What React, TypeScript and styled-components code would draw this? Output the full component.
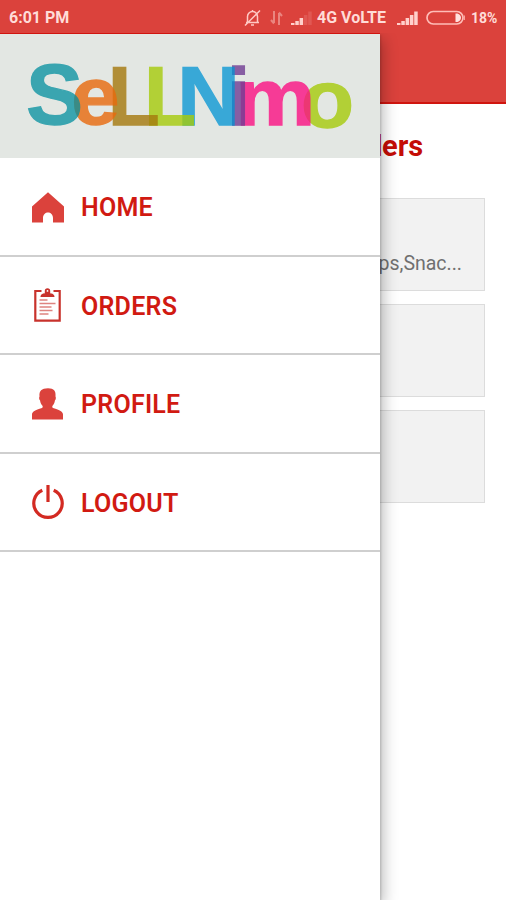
import React from "react";
import styled, { createGlobalStyle } from "styled-components";

const GlobalStyle = createGlobalStyle`
  * { box-sizing: border-box; }
  body { margin: 0; background: #fff; font-family: Roboto, "Liberation Sans", sans-serif; }
`;

const Screen = styled.div`
  position: relative;
  display: flex;
  flex-direction: column;
  width: 506px;
  height: 900px;
  overflow: hidden;
  background: #fff;
`;

const StatusBar = styled.header`
  display: flex;
  align-items: center;
  height: 34px;
  padding: 1px 8px 0 9px;
  background: #db423c;
  color: #ffdcd8;
  font-size: 16px;
  font-weight: 700;
`;

const Clock = styled.span`
  flex: 1;
`;

const StatusText = styled.span<{ $width: number; $size?: number }>`
  width: ${(p) => p.$width}px;
  font-size: ${(p) => p.$size ?? 16}px;
  white-space: nowrap;
`;

const StatusIcon = styled.svg<{ $gap: number }>`
  flex: none;
  margin-right: ${(p) => p.$gap}px;
`;

const AppBar = styled.div`
  height: 70px;
  background: #db423c;
  border-bottom: 2px solid #d0150f;
`;

const Content = styled.main`
  display: flex;
  flex-direction: column;
  padding: 26px 21px 0;
`;

const Title = styled.h1`
  margin: 0 62px 35px 0;
  color: #c40d06;
  font-size: 29px;
  font-weight: 700;
  line-height: 33px;
  letter-spacing: -0.1px;
  text-align: right;
`;

const Card = styled.section`
  display: flex;
  align-items: flex-end;
  justify-content: flex-end;
  height: 93px;
  margin-bottom: 13px;
  padding: 0 22px 13px;
  background: #f2f2f2;
  border: 1px solid #dcdcdc;
  color: #707070;
  font-size: 19.5px;
  line-height: 26px;
`;

const Drawer = styled.aside`
  position: absolute;
  top: 33px;
  bottom: 0;
  left: 0;
  width: 380px;
  background: #fff;
  border-top: 1px solid #d0150f;
  box-shadow: 1px 2px 2px rgba(0, 0, 0, 0.15), 3px 6px 14px rgba(0, 0, 0, 0.28);
  clip-path: inset(0 -30px 0 0);
`;

const Brand = styled.div`
  height: 124px;
  background: #e3e7e3;
`;

const Letter = styled.text`
  font-family: "Liberation Sans", Arial, sans-serif;
  font-weight: 700;
  font-size: 85px;
  stroke-width: 1.4px;
`;

const Menu = styled.nav`
  display: grid;
  grid-template-rows: 99px 98px 99px 98px;
`;

const MenuItem = styled.a`
  display: flex;
  align-items: center;
  gap: 15px;
  padding: 2px 30px 0;
  border-bottom: 2px solid #cfcfcf;
  color: #d11a12;
  font-size: 25px;
  font-weight: 600;
  letter-spacing: 0.25px;
`;

const MenuIcon = styled.svg`
  width: 36px;
  height: 36px;
  flex: none;
`;

// Listed right to left so that each letter is painted over its right neighbour.
const letters = [
  { char: "o", x: 301, y: 92.8, sx: 1.02, sy: 0.95, color: "#a6cb0b", alpha: 0.8 },
  { char: "m", x: 235.3, y: 91, sx: 1.06, sy: 0.945, color: "#fb1183", alpha: 0.8 },
  { char: "i", x: 226.8, y: 91, sx: 1, sy: 0.95, color: "#713d94", alpha: 0.8 },
  { char: "N", x: 177.2, y: 91, sx: 1.02, sy: 0.99, color: "#0094d4", alpha: 0.75 },
  { char: "L", x: 144, y: 91, sx: 1.0, sy: 0.99, color: "#a6cb0b", alpha: 0.8 },
  { char: "L", x: 107.8, y: 91, sx: 1.0, sy: 0.99, color: "#a5790d", alpha: 0.8 },
  { char: "e", x: 71.2, y: 90, sx: 1.02, sy: 0.95, color: "#e96a0d", alpha: 0.8 },
  { char: "S", x: 26.2, y: 90, sx: 1.0, sy: 1.0, color: "#028f9f", alpha: 0.75 },
];

const Logo = () => (
  <svg width="380" height="124" viewBox="0 0 380 124" role="img" aria-label="SeLLNimo">
    {letters.map((l) => (
      <Letter
        key={l.x}
        fill={l.color}
        stroke={l.color}
        opacity={l.alpha}
        transform={`translate(${l.x} ${l.y}) scale(${l.sx} ${l.sy})`}
      >
        {l.char}
      </Letter>
    ))}
  </svg>
);

const HomeIcon = () => (
  <MenuIcon viewBox="0 0 36 36" fill="#db423c">
    <path d="M18 2.200 34 16.500v16H23V28c0-7.500-10-7.500-10 0v4.500H2V16.500Z" />
  </MenuIcon>
);

const OrdersIcon = () => (
  <MenuIcon viewBox="0 0 36 36" fill="none" stroke="#c8322c">
    <path d="M11.500 3H5.300v29.700h24.400V3H23.500" strokeWidth="2.200" />
    <path d="M10.500 9c0-3 2.500-3.500 4.300-3.800V3a2.700 2.700 0 0 1 5.400 0v2.200c2 .3 4.300 1 4.300 3.800Z" fill="#c8322c" stroke="none" />
    <circle cx="17.500" cy="2.900" r=".9" fill="#fff" stroke="none" />
    <path d="M9.500 12h8M9.500 15.500h16M9.500 19h12M9.500 22.500h13M9.500 26h9" strokeWidth="1.300" opacity=".6" />
  </MenuIcon>
);

const ProfileIcon = () => (
  <MenuIcon viewBox="0 0 36 36" fill="#db423c">
    <path d="M2 32.500v-5c0-3 3-4.300 10-6.600.8-.3 1-1.600.3-2.400-1.200-1.400-2-3-2.200-5-1-.9-1.300-3-.6-4C9 4 11.500 1.300 18 1.300c6 0 8 2.700 7.500 8.200.7 1 .4 3.100-.6 4-.2 2-1 3.600-2.200 5-.7.8-.5 2.100.3 2.400 7 2.300 10 3.600 10 6.600v5Z" />
  </MenuIcon>
);

const PowerIcon = () => (
  <MenuIcon viewBox="0 0 36 36" fill="none" stroke="#d32a22" strokeWidth="3.200">
    <path d="M12.300 5.200a14.200 14.200 0 1 0 11.400 0M18 0v17" />
  </MenuIcon>
);

const MutedBell = () => (
  <StatusIcon $gap={9} width="17" height="18" viewBox="0 0 17 18" fill="none" stroke="#ffc9c4" strokeWidth="1.500">
    <path d="M2 13.500h13M3.500 13V7.500a5 5 0 0 1 10 0V13M7 16h3M8.500 1v1.500M1 16.500 16 1.500" />
  </StatusIcon>
);

const DataArrows = () => (
  <StatusIcon $gap={8} width="13" height="16" viewBox="0 0 13 16" fill="none" stroke="#ea857f" strokeWidth="2">
    <path d="M4 1v12M1 10l3 3.500M9 15V3M12 6 9 2.500" />
  </StatusIcon>
);

const Signal = ({ dim, gap }: { dim: number; gap: number }) => (
  <StatusIcon $gap={gap} width="21" height="15" viewBox="0 0 21 15" fill="#ffd0cb">
    {[2, 4, 7, 10, 13.500].map((h, i) => (
      <rect key={h} x={i * 4.300} y={15 - h} width="3.500" height={h} opacity={i >= 5 - dim ? 0.16 : 1} />
    ))}
  </StatusIcon>
);

const Battery = () => (
  <StatusIcon $gap={6} width="39" height="16" viewBox="0 0 39 16">
    <rect x="1" y="1.500" width="36" height="12.500" rx="6.200" fill="none" stroke="#ffbdb7" strokeWidth="1.700" />
    <path d="M29.500 3.500h2q3.500 1.500 3.500 4.300t-3.500 4.300h-2Z" fill="#ffe3e0" />
    <path d="M38.300 5.500v4.500" stroke="#ffbdb7" strokeWidth="1" />
  </StatusIcon>
);

const menu = [
  { label: "HOME", Icon: HomeIcon },
  { label: "ORDERS", Icon: OrdersIcon },
  { label: "PROFILE", Icon: ProfileIcon },
  { label: "LOGOUT", Icon: PowerIcon },
];

export default function App() {
  return (
    <Screen>
      <GlobalStyle />
      <StatusBar>
        <Clock>6:01 PM</Clock>
        <MutedBell />
        <DataArrows />
        <Signal dim={2} gap={5} />
        <StatusText $width={80}>4G VoLTE</StatusText>
        <Signal dim={0} gap={8} />
        <Battery />
        <StatusText $width={27} $size={14}>18%</StatusText>
      </StatusBar>
      <AppBar />
      <Content>
        <Title>Orders</Title>
        <Card>Chips,Snac...</Card>
        <Card />
        <Card />
      </Content>
      <Drawer>
        <Brand>
          <Logo />
        </Brand>
        <Menu>
          {menu.map(({ label, Icon }) => (
            <MenuItem key={label}>
              <Icon />
              {label}
            </MenuItem>
          ))}
        </Menu>
      </Drawer>
    </Screen>
  );
}
